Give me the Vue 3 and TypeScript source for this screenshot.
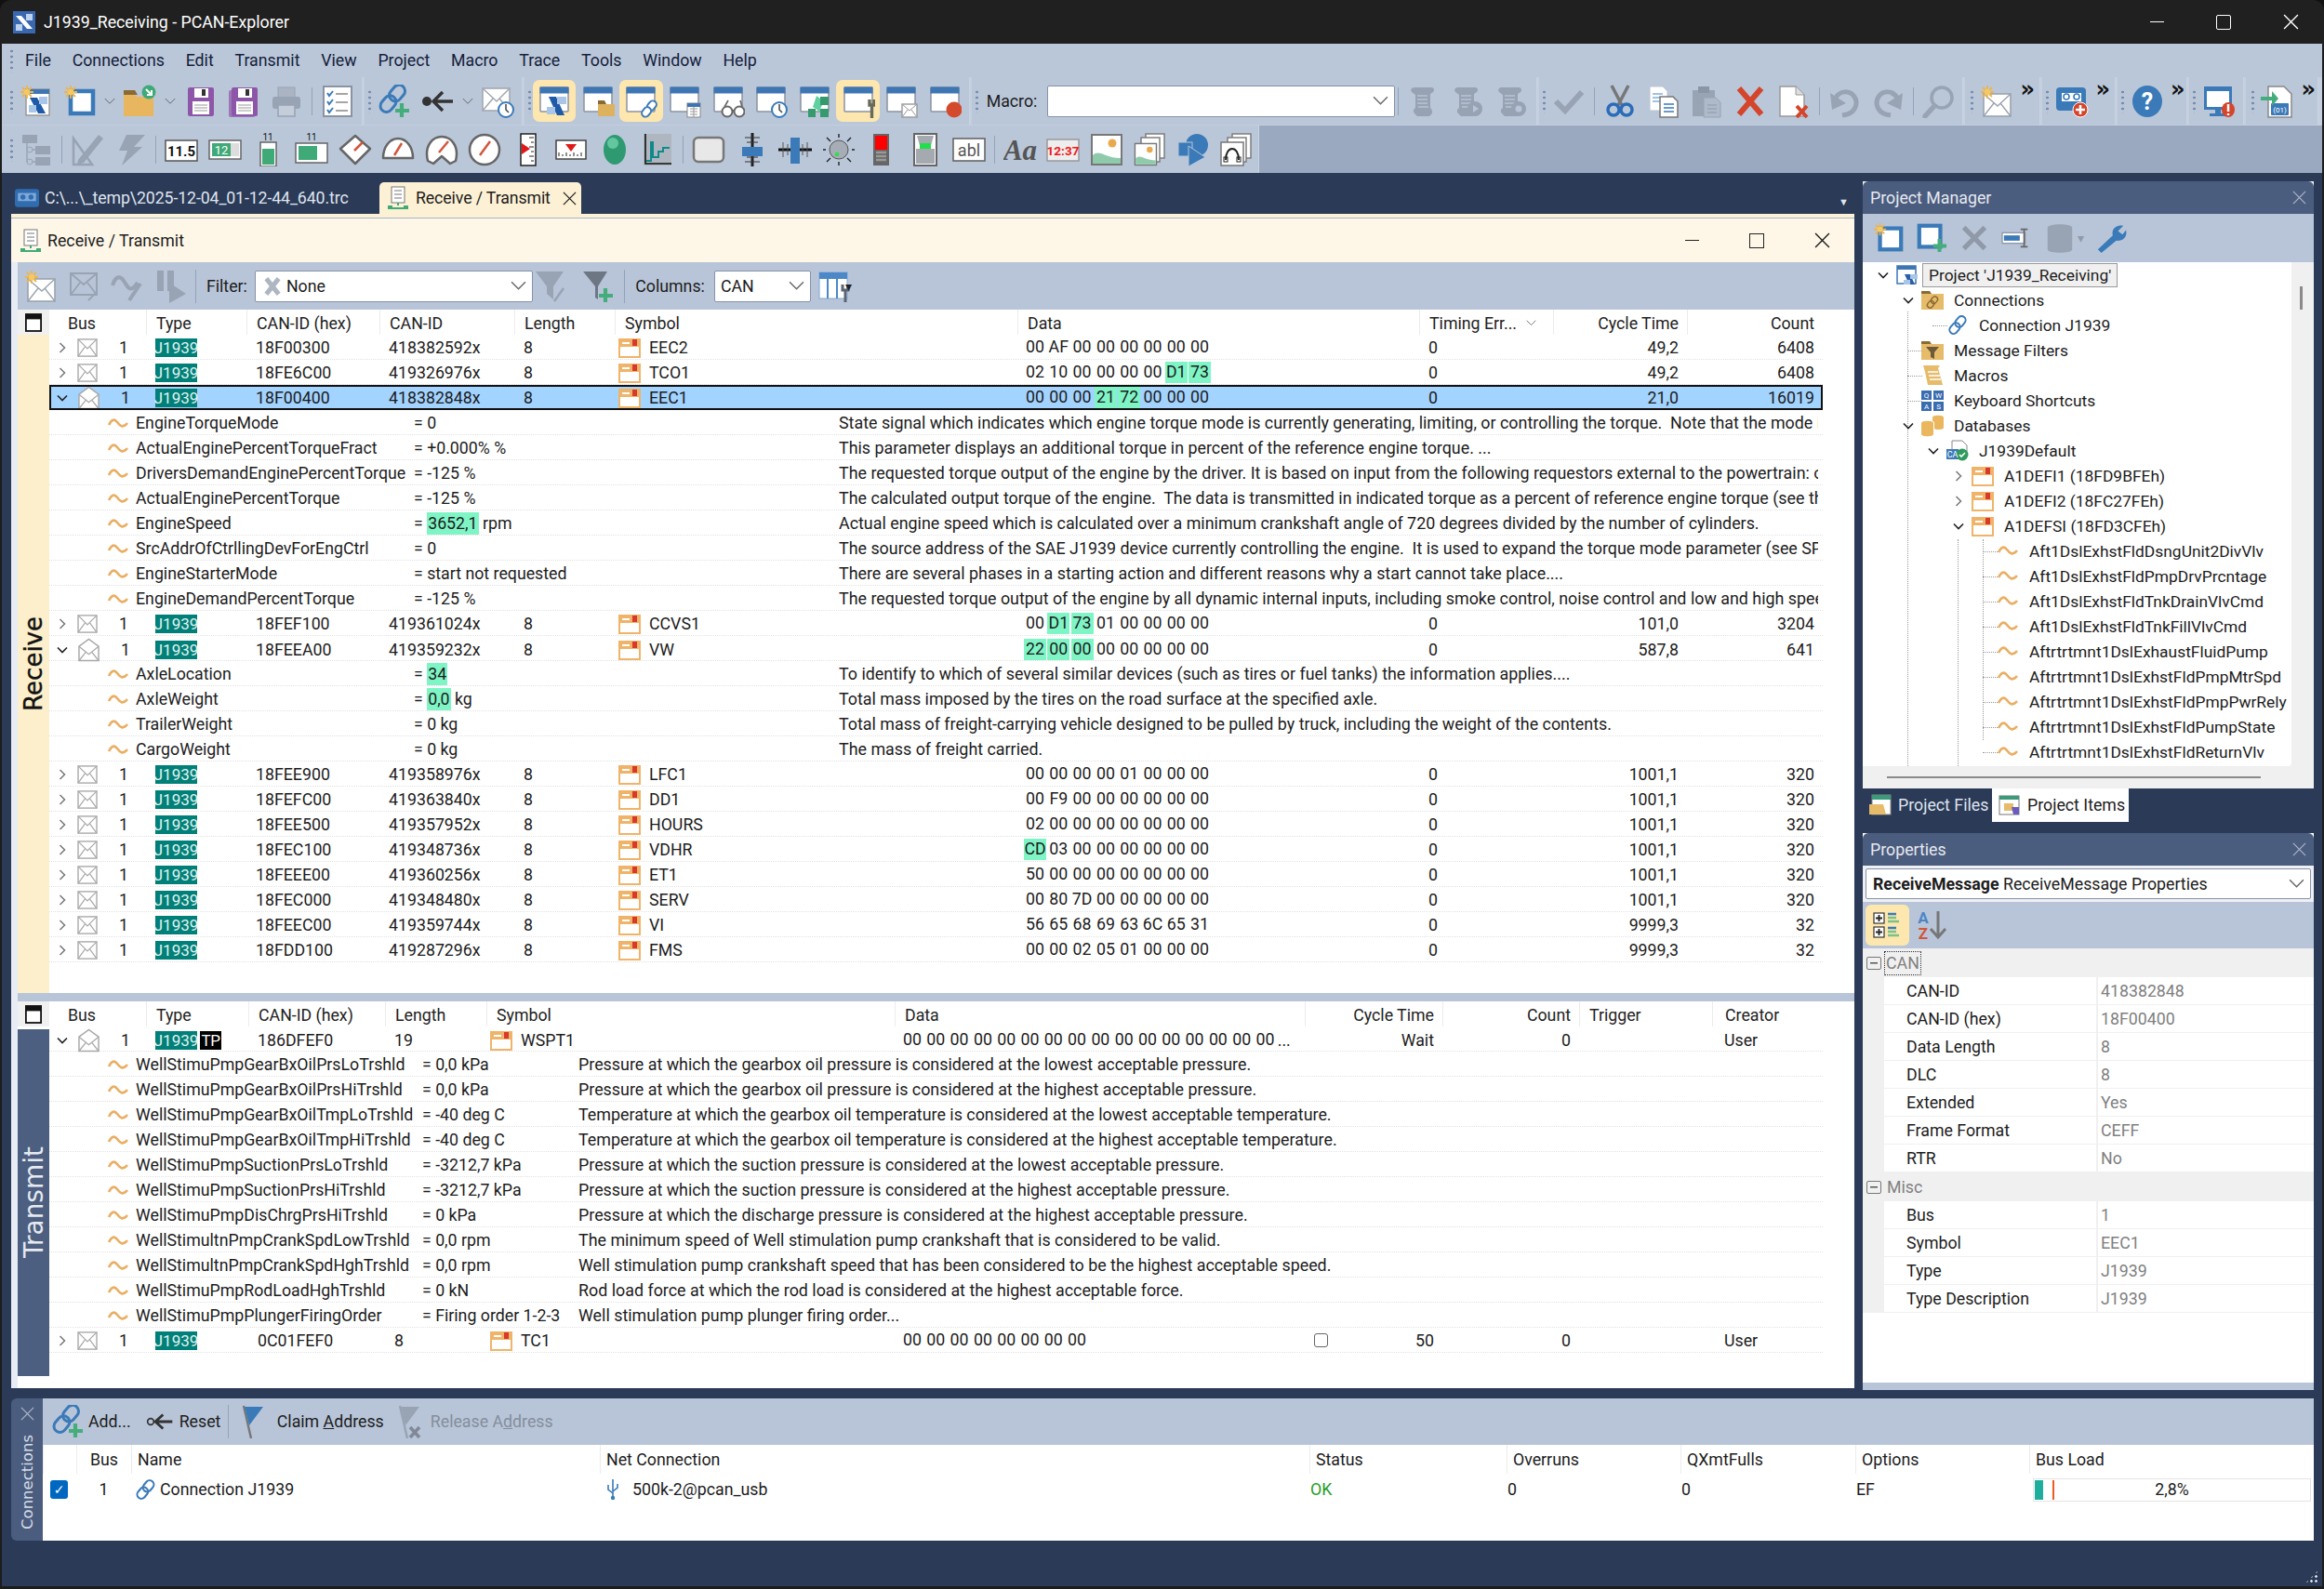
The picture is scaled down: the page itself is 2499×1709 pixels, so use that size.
<script setup lang="ts">
interface TbGroup { w: number; pad?: number; macro?: boolean; items: string[] }
interface RxMsg { id: string; can: string; sym: string; data: string; hl?: number[]; cycle: string; count: string; open?: boolean; sel?: boolean; signals?: Sig[] }
interface Sig { name: string; value: string; hot?: string; rest?: string; desc: string }
interface TreeRow { l: number; chev?: 'd' | 'r'; icon: string; text: string; leaf?: boolean; sel?: boolean }
interface IconText { x: number; y: number; t: string; s: number; f: string; w?: number; fam?: string; it?: boolean }

const menus = ['File', 'Connections', 'Edit', 'Transmit', 'View', 'Project', 'Macro', 'Trace', 'Tools', 'Window', 'Help']

const hotIcons = ['winproj', 'winlink', 'winwrench']

// captions drawn on top of an icon, in the icon's own 36 or 24 unit box
const iconText: Record<string, IconText[]> = {
	help: [{ x: 18, y: 27, t: '?', s: 25, f: '#fff', w: 700 }],
	filearrow: [{ x: 20.5, y: 30, t: '(01)', s: 8, f: '#fff' }],
	num115: [{ x: 18, y: 24.5, t: '11.5', s: 15, f: '#111', w: 700 }],
	num12: [{ x: 14, y: 23, t: '12', s: 13, f: '#fff' }],
	vbar: [{ x: 18, y: 8, t: '11', s: 10, f: '#111' }],
	hbar: [{ x: 18, y: 8, t: '11', s: 10, f: '#111' }],
	abl: [{ x: 18, y: 25, t: 'abl', s: 18, f: '#555' }],
	aa: [{ x: 18, y: 29, t: 'Aa', s: 31, f: '#555', w: 700, it: true, fam: 'Liberation Serif' }],
	clock: [{ x: 18, y: 24, t: '12:37', s: 13.5, f: '#f01818', w: 700 }],
	tkeys: [
		{ x: 5.5, y: 9, t: 'Q', s: 8, f: '#fff' },
		{ x: 18.5, y: 9, t: 'W', s: 8, f: '#fff' },
		{ x: 5.5, y: 21, t: 'A', s: 8, f: '#fff' },
		{ x: 18.5, y: 21, t: 'S', s: 8, f: '#fff' }
	],
	tcdb: [{ x: 6.5, y: 19, t: 'CA', s: 9, f: '#fff' }],
	az: [
		{ x: 9, y: 16, t: 'A', s: 17, f: '#4a86c6', w: 700 },
		{ x: 9, y: 33, t: 'Z', s: 17, f: '#d4553b', w: 700 }
	]
}

const toolbar1: TbGroup[] = [
	{ w: 388, pad: 5, items: ['newproj', 'newwin', 'v', 'folder', 'v', 'save', 'saveall', 'print', '|', 'checklist'] },
	{ w: 170, items: ['linkadd', 'arrowback', 'v', 'mailclock'] },
	{ w: 479, items: ['winproj', 'winfolder', 'winlink', 'wintable', 'winglass', 'winclock', 'winnet', 'winwrench', 'winmail', 'winrec'] },
	{ w: 608, macro: true, items: ['|', 'macro1', 'macro2', 'macro3'] },
	{ w: 456, items: ['okcheck', '|', 'scissors', 'copy', 'paste', 'delx', 'docx', '|', 'undo', 'redo', '|', 'find'] },
	{ w: 81, pad: 2, items: ['mailnew', '>'] },
	{ w: 79, items: ['tapeadd', '>'] },
	{ w: 75, items: ['help', '>'] },
	{ w: 59, items: ['monitor'] },
	{ w: 78, pad: 2, items: ['filearrow', '>'] }
]

const toolbar2: TbGroup = {
	w: 1352, pad: 5,
	items: ['tree', '|', 'pencil', 'bolt', '|', 'num115', 'num12', 'vbar', 'hbar', 'g1', 'g2', 'g3', 'g4', 'ruler', 'hruler', 'led', 'chart', '|', 'rect', 'vslider', 'hslider', 'bulb', 'signal', 'hourglass', 'abl', '|', 'aa', 'clock', 'pic', 'pics', 'shapes', 'arcs']
}

const rxRows: RxMsg[] = [
	{ id: '18F00300', can: '418382592x', sym: 'EEC2', data: '00 AF 00 00 00 00 00 00', cycle: '49,2', count: '6408' },
	{ id: '18FE6C00', can: '419326976x', sym: 'TCO1', data: '02 10 00 00 00 00 D1 73', hl: [6, 7], cycle: '49,2', count: '6408' },
	{
		id: '18F00400', can: '418382848x', sym: 'EEC1', data: '00 00 00 21 72 00 00 00', hl: [3, 4], cycle: '21,0', count: '16019', open: true, sel: true,
		signals: [
			{ name: 'EngineTorqueMode', value: '0', desc: 'State signal which indicates which engine torque mode is currently generating, limiting, or controlling the torque.  Note that the mode is not a' },
			{ name: 'ActualEnginePercentTorqueFract', value: '+0.000% %', desc: 'This parameter displays an additional torque in percent of the reference engine torque. ...' },
			{ name: 'DriversDemandEnginePercentTorque', value: '-125 %', desc: 'The requested torque output of the engine by the driver. It is based on input from the following requestors external to the powertrain: operator' },
			{ name: 'ActualEnginePercentTorque', value: '-125 %', desc: 'The calculated output torque of the engine.  The data is transmitted in indicated torque as a percent of reference engine torque (see the engine' },
			{ name: 'EngineSpeed', value: '', hot: '3652,1', rest: ' rpm', desc: 'Actual engine speed which is calculated over a minimum crankshaft angle of 720 degrees divided by the number of cylinders.' },
			{ name: 'SrcAddrOfCtrllingDevForEngCtrl', value: '0', desc: 'The source address of the SAE J1939 device currently controlling the engine.  It is used to expand the torque mode parameter (see SPN 899) in' },
			{ name: 'EngineStarterMode', value: 'start not requested', desc: 'There are several phases in a starting action and different reasons why a start cannot take place....' },
			{ name: 'EngineDemandPercentTorque', value: '-125 %', desc: 'The requested torque output of the engine by all dynamic internal inputs, including smoke control, noise control and low and high speed governing' }
		]
	},
	{ id: '18FEF100', can: '419361024x', sym: 'CCVS1', data: '00 D1 73 01 00 00 00 00', hl: [1, 2], cycle: '101,0', count: '3204' },
	{
		id: '18FEEA00', can: '419359232x', sym: 'VW', data: '22 00 00 00 00 00 00 00', hl: [0, 1, 2], cycle: '587,8', count: '641', open: true,
		signals: [
			{ name: 'AxleLocation', value: '', hot: '34', desc: 'To identify to which of several similar devices (such as tires or fuel tanks) the information applies....' },
			{ name: 'AxleWeight', value: '', hot: '0,0', rest: ' kg', desc: 'Total mass imposed by the tires on the road surface at the specified axle.' },
			{ name: 'TrailerWeight', value: '0 kg', desc: 'Total mass of freight-carrying vehicle designed to be pulled by truck, including the weight of the contents.' },
			{ name: 'CargoWeight', value: '0 kg', desc: 'The mass of freight carried.' }
		]
	},
	{ id: '18FEE900', can: '419358976x', sym: 'LFC1', data: '00 00 00 00 01 00 00 00', cycle: '1001,1', count: '320' },
	{ id: '18FEFC00', can: '419363840x', sym: 'DD1', data: '00 F9 00 00 00 00 00 00', cycle: '1001,1', count: '320' },
	{ id: '18FEE500', can: '419357952x', sym: 'HOURS', data: '02 00 00 00 00 00 00 00', cycle: '1001,1', count: '320' },
	{ id: '18FEC100', can: '419348736x', sym: 'VDHR', data: 'CD 03 00 00 00 00 00 00', hl: [0], cycle: '1001,1', count: '320' },
	{ id: '18FEEE00', can: '419360256x', sym: 'ET1', data: '50 00 00 00 00 00 00 00', cycle: '1001,1', count: '320' },
	{ id: '18FEC000', can: '419348480x', sym: 'SERV', data: '00 80 7D 00 00 00 00 00', cycle: '1001,1', count: '320' },
	{ id: '18FEEC00', can: '419359744x', sym: 'VI', data: '56 65 68 69 63 6C 65 31', cycle: '9999,3', count: '32' },
	{ id: '18FDD100', can: '419287296x', sym: 'FMS', data: '00 00 02 05 01 00 00 00', cycle: '9999,3', count: '32' }
]

const txSignals: Sig[] = [
	{ name: 'WellStimuPmpGearBxOilPrsLoTrshld', value: '0,0 kPa', desc: 'Pressure at which the gearbox oil pressure is considered at the lowest acceptable pressure.' },
	{ name: 'WellStimuPmpGearBxOilPrsHiTrshld', value: '0,0 kPa', desc: 'Pressure at which the gearbox oil pressure is considered at the highest acceptable pressure.' },
	{ name: 'WellStimuPmpGearBxOilTmpLoTrshld', value: '-40 deg C', desc: 'Temperature at which the gearbox oil temperature is considered at the lowest acceptable temperature.' },
	{ name: 'WellStimuPmpGearBxOilTmpHiTrshld', value: '-40 deg C', desc: 'Temperature at which the gearbox oil temperature is considered at the highest acceptable temperature.' },
	{ name: 'WellStimuPmpSuctionPrsLoTrshld', value: '-3212,7 kPa', desc: 'Pressure at which the suction pressure is considered at the lowest acceptable pressure.' },
	{ name: 'WellStimuPmpSuctionPrsHiTrshld', value: '-3212,7 kPa', desc: 'Pressure at which the suction pressure is considered at the highest acceptable pressure.' },
	{ name: 'WellStimuPmpDisChrgPrsHiTrshld', value: '0 kPa', desc: 'Pressure at which the discharge pressure is considered at the highest acceptable pressure.' },
	{ name: 'WellStimultnPmpCrankSpdLowTrshld', value: '0,0 rpm', desc: 'The minimum speed of Well stimulation pump crankshaft that is considered to be valid.' },
	{ name: 'WellStimultnPmpCrankSpdHghTrshld', value: '0,0 rpm', desc: 'Well stimulation pump crankshaft speed that has been considered to be the highest acceptable speed.' },
	{ name: 'WellStimuPmpRodLoadHghTrshld', value: '0 kN', desc: 'Rod load force at which the rod load is considered at the highest acceptable force.' },
	{ name: 'WellStimuPmpPlungerFiringOrder', value: 'Firing order 1-2-3', desc: 'Well stimulation pump plunger firing order...' }
]

const treeRows: TreeRow[] = [
	{ l: 0, chev: 'd', icon: 'tproj', text: "Project 'J1939_Receiving'", sel: true },
	{ l: 1, chev: 'd', icon: 'tconn', text: 'Connections' },
	{ l: 2, icon: 'link', text: 'Connection J1939', leaf: true },
	{ l: 1, icon: 'tfilter', text: 'Message Filters', leaf: true },
	{ l: 1, icon: 'tmacro', text: 'Macros', leaf: true },
	{ l: 1, icon: 'tkeys', text: 'Keyboard Shortcuts', leaf: true },
	{ l: 1, chev: 'd', icon: 'tdbs', text: 'Databases' },
	{ l: 2, chev: 'd', icon: 'tcdb', text: 'J1939Default' },
	{ l: 3, chev: 'r', icon: 'msg', text: 'A1DEFI1 (18FD9BFEh)' },
	{ l: 3, chev: 'r', icon: 'msg', text: 'A1DEFI2 (18FC27FEh)' },
	{ l: 3, chev: 'd', icon: 'msg', text: 'A1DEFSI (18FD3CFEh)' },
	...['Aft1DslExhstFldDsngUnit2DivVlv', 'Aft1DslExhstFldPmpDrvPrcntage', 'Aft1DslExhstFldTnkDrainVlvCmd', 'Aft1DslExhstFldTnkFillVlvCmd', 'Aftrtrtmnt1DslExhaustFluidPump', 'Aftrtrtmnt1DslExhstFldPmpMtrSpd', 'Aftrtrtmnt1DslExhstFldPmpPwrRely', 'Aftrtrtmnt1DslExhstFldPumpState', 'Aftrtrtmnt1DslExhstFldReturnVlv']
		.map((text): TreeRow => ({ l: 4, icon: 'wave', text, leaf: true }))
]

const propCan = [['CAN-ID', '418382848'], ['CAN-ID (hex)', '18F00400'], ['Data Length', '8'], ['DLC', '8'], ['Extended', 'Yes'], ['Frame Format', 'CEFF'], ['RTR', 'No']]
const propMisc = [['Bus', '1'], ['Symbol', 'EEC1'], ['Type', 'J1939'], ['Type Description', 'J1939']]

const rxHead = ['Bus', 'Type', 'CAN-ID (hex)', 'CAN-ID', 'Length', 'Symbol', 'Data']
const txHead = ['Bus', 'Type', 'CAN-ID (hex)', 'Length', 'Symbol', 'Data']

const bytes = (s: string) => s.split(' ')
const wspt = Array<string>(16).fill('00')
const tc1 = Array<string>(8).fill('00')
</script>

<template>
	<div class="app">
		<!-- icon sprite -->
		<svg class="sprite" width="0" height="0">
			<defs>
				<g id="star"><path d="M8 1v14M1 8h14M3 3l10 10M13 3L3 13" stroke="#efb44a" stroke-width="1.8" /><circle cx="8" cy="8" r="3.2" fill="#f6c862" /></g>
				<g id="winb"><rect x="3" y="3" width="30" height="26" rx="1" fill="#fff" stroke="#8a93a3" stroke-width="1.5" /><rect x="2.5" y="2.5" width="31" height="7" fill="#3e76b4" /></g>
				<g id="flop"><rect x="5" y="3" width="28" height="31" rx="2" fill="#8e56a8" /><rect x="12" y="4" width="15" height="10" fill="#fff" /><rect x="20" y="5" width="4" height="7" fill="#333" /><rect x="10" y="18" width="18" height="14" fill="#fff" /><path d="M12 22h14M12 25h14M12 28h14" stroke="#999" /></g>
				<g id="scroll"><path d="M9 3h17c3 0 4 3 2 5l-3 2v15c2 2 3 5 1 7-1 2-3 2-5 2H11l-3-3c-2-2-1-5 1-6V11L5 8C3 5 5 3 9 3z" fill="#97a2b3" /><path d="M11 12h11M11 16h11M11 20h11M12 24h11" stroke="#b8c5d8" stroke-width="1.6" /></g>
				<g id="picb"><rect x="2" y="2" width="32" height="32" fill="#fff" stroke="#777" stroke-width="2" /><circle cx="24" cy="11" r="4.5" fill="#eaa94d" /><path d="M3 24c7-7 13 3 30 3v6H3z" fill="#8fcbab" /></g>
			</defs>
			<symbol id="newproj" viewBox="0 0 36 36"><rect x="7" y="5" width="25" height="28" fill="#fff" stroke="#999" stroke-width="1.5" /><rect x="7" y="5" width="25" height="5" fill="#3e76b4" /><path d="M11 14h8l9 17h-8z" fill="#1f5aa8" /><rect x="21" y="13" width="9" height="8" fill="#a9c6e8" /><rect x="10" y="22" width="8" height="8" fill="#a9c6e8" /><use href="#star" /></symbol>
			<symbol id="newwin" viewBox="0 0 36 36"><rect x="8" y="7" width="24" height="24" fill="#fff" stroke="#3a7ab8" stroke-width="4.5" /><use href="#star" /></symbol>
			<symbol id="folder" viewBox="0 0 36 36"><path d="M1 10h11l3 3h18v21H1z" fill="#e8b65e" /><path d="M1 6h12l3 5H1z" fill="#8a6a32" /><circle cx="28" cy="8" r="7.5" fill="#3faa78" /><path d="M25 5l6 6M31 6v5h-5" stroke="#fff" stroke-width="2" fill="none" /></symbol>
			<symbol id="save" viewBox="0 0 36 36"><use href="#flop" /></symbol>
			<symbol id="saveall" viewBox="0 0 36 36"><rect x="2" y="6" width="28" height="29" rx="2" fill="#8e56a8" opacity=".7" /><use href="#flop" /></symbol>
			<symbol id="print" viewBox="0 0 36 36"><rect x="9" y="3" width="18" height="12" fill="#aab4c3" stroke="#98a3b3" /><rect x="3" y="13" width="30" height="13" rx="3" fill="#98a3b3" /><rect x="9" y="22" width="18" height="12" fill="#c4cedb" stroke="#98a3b3" stroke-width="1.5" /></symbol>
			<symbol id="checklist" viewBox="0 0 36 36"><rect x="3" y="2" width="30" height="32" fill="#fff" stroke="#8a93a3" stroke-width="2" /><path d="M7 9l2 3 4-5M7 18l2 3 4-5M7 27l2 3 4-5" stroke="#3a7ab8" stroke-width="2" fill="none" /><path d="M16 10h13M16 19h13M16 28h13" stroke="#888" stroke-width="1.5" /></symbol>
			<symbol id="linkadd" viewBox="0 0 36 36"><g transform="rotate(40 16 16)" fill="none" stroke="#3a7ab8" stroke-width="3"><rect x="9" y="-2" width="13" height="19" rx="6.5" /><rect x="9" y="13" width="13" height="19" rx="6.5" /></g><path d="M26 20v15M19 28h15" stroke="#45ad7c" stroke-width="4.2" /></symbol>
			<symbol id="link" viewBox="0 0 36 36"><g transform="rotate(40 18 18)" fill="none" stroke="#3a7ab8" stroke-width="3"><rect x="11" y="1" width="13" height="19" rx="6.5" /><rect x="11" y="15" width="13" height="19" rx="6.5" /></g></symbol>
			<symbol id="arrowback" viewBox="0 0 36 36"><circle cx="6" cy="18" r="5" fill="#333" /><path d="M13 18h21M23 8L13 18l10 10" stroke="#333" stroke-width="3.4" fill="none" /></symbol>
			<symbol id="mailclock" viewBox="0 0 36 36"><rect x="2" y="4" width="29" height="24" fill="#fff" stroke="#a2a9b3" stroke-width="1.6" /><path d="M2 4l15 14L31 4M2 28l11-13M31 28L20 15" fill="none" stroke="#a2a9b3" stroke-width="1.5" /><circle cx="27" cy="27" r="8" fill="#fff" stroke="#3a7ab8" stroke-width="2" /><path d="M27 21v6l3 3" fill="none" stroke="#444" stroke-width="1.5" /></symbol>
			<symbol id="winproj" viewBox="0 0 36 36"><use href="#winb" /><path d="M12 13h8l9 20h-8z" fill="#1f5aa8" /><rect x="21" y="13" width="10" height="8" fill="#a9c6e8" /><rect x="10" y="24" width="9" height="8" fill="#a9c6e8" /></symbol>
			<symbol id="winfolder" viewBox="0 0 36 36"><use href="#winb" /><path d="M18 19h6l2 2h10v13H18z" fill="#dcb25f" /><path d="M18 17h7l2 4h-9z" fill="#8a6a32" /></symbol>
			<symbol id="winlink" viewBox="0 0 36 36"><use href="#winb" /><g transform="rotate(40 27 26)" fill="#fff" stroke="#3a7ab8" stroke-width="2"><rect x="23" y="16" width="8" height="11" rx="4" /><rect x="23" y="25" width="8" height="11" rx="4" /></g></symbol>
			<symbol id="wintable" viewBox="0 0 36 36"><use href="#winb" /><rect x="21" y="20" width="14" height="15" fill="#fff" stroke="#888" /><rect x="21" y="20" width="14" height="4" fill="#3e76b4" /><path d="M24 26h8M24 29h8M24 32h8M28 24v11" stroke="#999" /></symbol>
			<symbol id="winglass" viewBox="0 0 36 36"><use href="#winb" /><circle cx="17" cy="29" r="5.5" fill="#fff" stroke="#666" stroke-width="2" /><circle cx="30" cy="29" r="5.5" fill="#fff" stroke="#666" stroke-width="2" /><path d="M22 28h3M14 24l4-7M33 24l-2-7" stroke="#666" stroke-width="1.6" /></symbol>
			<symbol id="winclock" viewBox="0 0 36 36"><use href="#winb" /><circle cx="27" cy="27" r="8" fill="#fff" stroke="#3a7ab8" stroke-width="2" /><path d="M27 21v6l3 3" fill="none" stroke="#444" stroke-width="1.5" /></symbol>
			<symbol id="winnet" viewBox="0 0 36 36"><use href="#winb" /><path d="M20 12l8 6-4 8 4 6-12-8z" fill="#5fd0a0" /><rect x="24" y="13" width="9" height="9" fill="#37996e" /><rect x="11" y="26" width="8" height="9" fill="#37996e" /><rect x="24" y="26" width="9" height="9" fill="#37996e" /></symbol>
			<symbol id="winwrench" viewBox="0 0 36 36"><use href="#winb" /><path d="M30 16v6h5v-6M32.5 22v14" fill="none" stroke="#6a6a5a" stroke-width="3.4" /></symbol>
			<symbol id="winmail" viewBox="0 0 36 36"><use href="#winb" /><rect x="19" y="21" width="16" height="14" fill="#fff" stroke="#999" stroke-width="1.4" /><path d="M19 21l8 7 8-7M19 35l6-8M35 35l-6-8" fill="none" stroke="#999" /></symbol>
			<symbol id="winrec" viewBox="0 0 36 36"><use href="#winb" /><circle cx="28" cy="27" r="8.5" fill="#d34a2c" /></symbol>
			<symbol id="macro1" viewBox="0 0 36 36"><use href="#scroll" /></symbol>
			<symbol id="macro2" viewBox="0 0 36 36"><use href="#scroll" /><circle cx="26" cy="26" r="8" fill="#97a2b3" /><path d="M24 22l6 4-6 4z" fill="#b8c5d8" /></symbol>
			<symbol id="macro3" viewBox="0 0 36 36"><use href="#scroll" /><circle cx="26" cy="26" r="8" fill="#97a2b3" /><circle cx="26" cy="26" r="3.5" fill="#b8c5d8" /></symbol>
			<symbol id="okcheck" viewBox="0 0 36 36"><path d="M4 18l10 10L32 8" fill="none" stroke="#98a3b3" stroke-width="6" /></symbol>
			<symbol id="scissors" viewBox="0 0 36 36"><path d="M9 1l11 21M27 1L16 22" stroke="#777" stroke-width="3.5" /><circle cx="11" cy="27" r="6" fill="none" stroke="#2a6cb8" stroke-width="3.5" /><circle cx="25" cy="27" r="6" fill="none" stroke="#2a6cb8" stroke-width="3.5" /></symbol>
			<symbol id="copy" viewBox="0 0 36 36"><path d="M3 2h14l5 5v21H3z" fill="#fff" stroke="#bcc4d0" /><path d="M6 10h11M6 14h11M6 18h11" stroke="#7fb0e0" stroke-width="1.6" /><path d="M14 13h14l5 5v17H14z" fill="#fff" stroke="#777" stroke-width="1.5" /><path d="M18 21h11M18 25h11M18 29h11" stroke="#3a7ab8" stroke-width="1.6" /></symbol>
			<symbol id="paste" viewBox="0 0 36 36"><rect x="3" y="6" width="24" height="28" fill="#98a3b3" /><rect x="9" y="2" width="12" height="7" fill="#8a95a5" /><path d="M15 14h13l5 5v16H15z" fill="#aeb9c9" stroke="#98a3b3" /><path d="M19 22h10M19 26h10M19 30h10" stroke="#98a3b3" stroke-width="1.5" /></symbol>
			<symbol id="delx" viewBox="0 0 36 36"><path d="M6 4l24 28M30 4L6 32" stroke="#d4452b" stroke-width="6" /></symbol>
			<symbol id="docx" viewBox="0 0 36 36"><path d="M3 2h17l9 9v23H3z" fill="#fff" stroke="#999" stroke-width="1.5" /><path d="M20 2v9h9" fill="#ddd" stroke="#999" /><path d="M21 23l11 12M32 23L21 35" stroke="#d4452b" stroke-width="4" /></symbol>
			<symbol id="undo" viewBox="0 0 36 36"><path d="M15 33l5-1c10-3 12-13 8-19-5-7-15-7-20 1" fill="none" stroke="#98a3b3" stroke-width="5" /><path d="M2 9l2 18 15-7z" fill="#98a3b3" /></symbol>
			<symbol id="redo" viewBox="0 0 36 36"><path d="M21 33l-5-1C6 29 4 19 8 13c5-7 15-7 20 1" fill="none" stroke="#98a3b3" stroke-width="5" /><path d="M34 9l-2 18-15-7z" fill="#98a3b3" /></symbol>
			<symbol id="find" viewBox="0 0 36 36"><circle cx="21" cy="14" r="11" fill="none" stroke="#98a3b3" stroke-width="3.5" /><path d="M13 23L3 34" stroke="#98a3b3" stroke-width="5.5" stroke-linecap="round" /></symbol>
			<symbol id="mailnew" viewBox="0 0 36 36"><rect x="4" y="10" width="29" height="24" fill="#fff" stroke="#9aa3ad" stroke-width="1.6" /><path d="M4 10l15 13 14-13M4 34l11-14M33 34L22 20" fill="none" stroke="#9aa3ad" stroke-width="1.4" /><use href="#star" /></symbol>
			<symbol id="mailoff" viewBox="0 0 36 36"><rect x="3" y="4" width="28" height="23" fill="none" stroke="#98a3b3" stroke-width="2" /><path d="M3 4l14 12L31 4M3 27l10-13M31 27L21 14M22 33l8-8" fill="none" stroke="#98a3b3" stroke-width="1.8" /></symbol>
			<symbol id="waveoff" viewBox="0 0 36 36"><path d="M2 17c3-10 8-11 12-5s6 12 12 6l3-4M20 33l12-18" fill="none" stroke="#98a3b3" stroke-width="4" /></symbol>
			<symbol id="txoff" viewBox="0 0 36 36"><path d="M3 1h7v22H3zM14 1h7v22h-7z" fill="#98a3b3" /><path d="M16 14l18 12-18 10z" fill="#98a3b3" /></symbol>
			<symbol id="tapeadd" viewBox="0 0 36 36"><rect x="1" y="3" width="32" height="25" rx="4" fill="#3a7ab8" /><rect x="7" y="9" width="21" height="9" fill="#fff" /><circle cx="12" cy="13" r="3" fill="none" stroke="#3a7ab8" stroke-width="1.6" /><circle cx="23" cy="13" r="3" fill="none" stroke="#3a7ab8" stroke-width="1.6" /><circle cx="27" cy="27" r="8" fill="#d4452b" stroke="#fff" /><path d="M27 22v10M22 27h10" stroke="#fff" stroke-width="2.6" /></symbol>
			<symbol id="help" viewBox="0 0 36 36"><ellipse cx="18" cy="18" rx="16" ry="17" fill="#3a7ab8" /></symbol>
			<symbol id="monitor" viewBox="0 0 36 36"><rect x="2" y="2" width="30" height="25" fill="#3a7ab8" /><rect x="5" y="7" width="24" height="17" fill="#fff" /><rect x="14" y="27" width="6" height="4" fill="#3a7ab8" /><rect x="8" y="31" width="18" height="3" fill="#3a7ab8" /><ellipse cx="28" cy="27" rx="7" ry="8" fill="#d4452b" /><path d="M28 21v8M28 31v2" stroke="#fff" stroke-width="2.5" /></symbol>
			<symbol id="filearrow" viewBox="0 0 36 36"><path d="M8 2h17l8 8v25H8z" fill="#fff" stroke="#888" stroke-width="1.5" /><rect x="11" y="20" width="19" height="13" rx="1" fill="#3a7ab8" /><path d="M0 13h12v-6l7 8-7 8v-6H0z" fill="#45ad7c" /></symbol>
			<symbol id="tree" viewBox="0 0 36 36"><rect x="3" y="2" width="16" height="9" fill="#98a3b3" /><rect x="17" y="14" width="16" height="9" fill="#98a3b3" /><rect x="17" y="26" width="16" height="9" fill="#98a3b3" /><path d="M8 11v20h9M8 18h9" fill="none" stroke="#98a3b3" stroke-width="1.5" /><circle cx="11" cy="18" r="3" fill="#b8c5d8" stroke="#98a3b3" /><circle cx="11" cy="31" r="3" fill="#b8c5d8" stroke="#98a3b3" /></symbol>
			<symbol id="pencil" viewBox="0 0 36 36"><path d="M3 34V6l20 28z" fill="none" stroke="#98a3b3" stroke-width="2.5" /><path d="M8 29L30 2l5 4-21 26-7 2z" fill="#98a3b3" /></symbol>
			<symbol id="bolt" viewBox="0 0 36 36"><path d="M14 2h20L22 15h9L9 35l6-16H6z" fill="#98a3b3" /></symbol>
			<symbol id="num115" viewBox="0 0 36 36"><rect x="1" y="8" width="34" height="22" fill="#fff" stroke="#555" stroke-width="1.5" /></symbol>
			<symbol id="num12" viewBox="0 0 36 36"><rect x="1" y="8" width="34" height="20" fill="#fff" stroke="#666" stroke-width="1.5" /><rect x="4" y="11" width="20" height="14" fill="#3faa78" /><rect x="24" y="11" width="9" height="14" fill="#ddd" /></symbol>
			<symbol id="vbar" viewBox="0 0 36 36"><rect x="10" y="10" width="17" height="26" fill="#fff" stroke="#666" stroke-width="1.5" /><rect x="12" y="17" width="13" height="17" fill="#3faa78" /></symbol>
			<symbol id="hbar" viewBox="0 0 36 36"><rect x="1" y="11" width="34" height="21" fill="#fff" stroke="#666" stroke-width="1.5" /><rect x="4" y="14" width="20" height="15" fill="#3faa78" /></symbol>
			<symbol id="g1" viewBox="0 0 36 36"><path d="M2 17L18 3l16 14-16 16z" fill="#fff" stroke="#666" stroke-width="2.5" stroke-linejoin="round" /><path d="M17 19l9-9" stroke="#d4553b" stroke-width="2.5" /></symbol>
			<symbol id="g2" viewBox="0 0 36 36"><path d="M2 27c0-12 7-21 16-21s16 9 16 21z" fill="#fff" stroke="#666" stroke-width="2.5" stroke-linejoin="round" /><path d="M14 24l8-13" stroke="#d4553b" stroke-width="2.5" /></symbol>
			<symbol id="g3" viewBox="0 0 36 36"><path d="M3 30C-1 14 8 4 18 4s19 10 15 26l-6 3-9-8-9 8z" fill="#fff" stroke="#666" stroke-width="2.5" stroke-linejoin="round" /><path d="M15 21l10-12" stroke="#d4553b" stroke-width="2.5" /></symbol>
			<symbol id="g4" viewBox="0 0 36 36"><circle cx="18" cy="18" r="16" fill="#fff" stroke="#666" stroke-width="2.5" /><path d="M13 24l11-15" stroke="#d4553b" stroke-width="2.5" /></symbol>
			<symbol id="ruler" viewBox="0 0 36 36"><rect x="10" y="1" width="16" height="34" fill="#fff" stroke="#222" stroke-width="1.5" /><path d="M19 5h5M21 10h3M19 15h5M21 20h3M19 25h5M21 30h3" stroke="#222" /><path d="M11 11l9 6-9 6z" fill="#e01818" /></symbol>
			<symbol id="hruler" viewBox="0 0 36 36"><rect x="2" y="8" width="32" height="20" fill="#fff" stroke="#444" stroke-width="1.5" /><path d="M12 12h12l-6 8z" fill="#e01818" /><path d="M5 25v-4M9 25v-2M13 25v-4M17 25v-2M21 25v-4M25 25v-2M29 25v-4" stroke="#222" /></symbol>
			<symbol id="led" viewBox="0 0 36 36"><ellipse cx="18" cy="18" rx="12" ry="16" fill="#2f9a72" /><ellipse cx="16" cy="11" rx="6" ry="6" fill="#62c79e" /></symbol>
			<symbol id="chart" viewBox="0 0 36 36"><rect x="3" y="1" width="30" height="34" fill="#b0b6bf" /><path d="M5 1v32h28" fill="none" stroke="#111" stroke-width="1.6" /><path d="M6 30h5V10h2v16h6v-6h5v-4h7" fill="none" stroke="#0f8a8a" stroke-width="2" /></symbol>
			<symbol id="rect" viewBox="0 0 36 36"><rect x="2" y="5" width="32" height="26" rx="5" fill="#e8e8e8" stroke="#777" stroke-width="2.5" /></symbol>
			<symbol id="vslider" viewBox="0 0 36 36"><path d="M18 0v36" stroke="#222" stroke-width="3" /><path d="M10 5h16M12 10h12M12 26h12M10 31h16" stroke="#333" /><rect x="7" y="15" width="22" height="10" fill="#3a7ab8" /></symbol>
			<symbol id="hslider" viewBox="0 0 36 36"><path d="M0 18h36" stroke="#111" stroke-width="3" /><path d="M5 10v16M10 12v12M26 12v12M31 10v16" stroke="#555" /><rect x="13" y="5" width="10" height="28" fill="#3a7ab8" /></symbol>
			<symbol id="bulb" viewBox="0 0 36 36"><circle cx="18" cy="18" r="10" fill="#a6adb6" stroke="#555" /><rect x="14" y="21" width="4" height="4" fill="#2ee04a" /><path d="M18 1v4M18 31v4M5 5l4 4M31 5l-4 4M5 31l4-4M31 31l-4-4M1 18h3M32 18h3" stroke="#222" stroke-width="1.4" /></symbol>
			<symbol id="signal" viewBox="0 0 36 36"><rect x="9" y="1" width="17" height="34" fill="#666" /><rect x="11" y="3" width="13" height="15" fill="#f00" /><path d="M12 21h11M12 25h11M12 29h11" stroke="#999" stroke-width="2.5" /></symbol>
			<symbol id="hourglass" viewBox="0 0 36 36"><rect x="6" y="1" width="24" height="34" fill="#fff" stroke="#666" stroke-width="2" /><path d="M9 3h18l-4 14h5v16H8V17h5z" fill="#a4aab0" /><rect x="12" y="11" width="12" height="6" fill="#1fe04a" /></symbol>
			<symbol id="abl" viewBox="0 0 36 36"><rect x="1" y="6" width="34" height="24" fill="#fff" stroke="#666" stroke-width="1.6" /></symbol>
			<symbol id="aa" viewBox="0 0 36 36"></symbol>
			<symbol id="clock" viewBox="0 0 36 36"><rect x="1" y="7" width="34" height="23" fill="#eee" stroke="#999" stroke-width="1.5" /></symbol>
			<symbol id="pic" viewBox="0 0 36 36"><use href="#picb" /></symbol>
			<symbol id="pics" viewBox="0 0 36 36"><rect x="14" y="1" width="20" height="26" fill="#fff" stroke="#777" stroke-width="1.4" /><rect x="9" y="5" width="20" height="26" fill="#fff" stroke="#777" stroke-width="1.4" /><g transform="translate(1 10) scale(.72)"><use href="#picb" /></g></symbol>
			<symbol id="shapes" viewBox="0 0 36 36"><circle cx="22" cy="13" r="12" fill="#3a7ab8" /><rect x="2" y="10" width="15" height="15" fill="#3a7ab8" stroke="#b8c5d8" /><path d="M13 14l18 12-18 10z" fill="#3a7ab8" stroke="#b8c5d8" /></symbol>
			<symbol id="arcs" viewBox="0 0 36 36"><rect x="14" y="1" width="20" height="26" fill="#fff" stroke="#777" stroke-width="1.4" /><rect x="9" y="5" width="20" height="26" fill="#fff" stroke="#777" stroke-width="1.4" /><rect x="2" y="10" width="24" height="25" fill="#fff" stroke="#777" stroke-width="1.5" /><path d="M7 29c0-16 14-16 14 0" fill="none" stroke="#222" stroke-width="2" /><rect x="5" y="26" width="4" height="5" fill="none" stroke="#222" /><rect x="19" y="26" width="4" height="5" fill="none" stroke="#222" /></symbol>
			<symbol id="xnone" viewBox="0 0 24 24"><path d="M4 2l16 20M20 2L4 22" stroke="#aeb6c2" stroke-width="6" /></symbol>
			<symbol id="funneloff" viewBox="0 0 36 36"><path d="M2 2h30L21 18v14l-7-6V18z" fill="#98a3b3" /><path d="M22 34l10-14" stroke="#98a3b3" stroke-width="2.5" /></symbol>
			<symbol id="funnelplus" viewBox="0 0 36 36"><path d="M2 2h26L18 18v14l-3-2V18z" fill="#6d7784" /><path d="M26 20v15M19 28h15" stroke="#45ad7c" stroke-width="4.2" /></symbol>
			<symbol id="columns" viewBox="0 0 36 36"><rect x="2" y="3" width="30" height="28" fill="#fff" stroke="#7fa8d8" /><rect x="2" y="3" width="30" height="7" fill="#4c88c8" /><path d="M11 3v28M21 3v28" stroke="#4c88c8" stroke-width="2" /><path d="M27 16v6h6v-6M30 22v13" fill="none" stroke="#5a6472" stroke-width="3" /></symbol>
			<symbol id="addwin" viewBox="0 0 36 36"><rect x="4" y="4" width="24" height="24" fill="#fff" stroke="#3a7ab8" stroke-width="4.5" /><path d="M27 19v15M20 27h15" stroke="#45ad7c" stroke-width="4.2" /></symbol>
			<symbol id="xgrey" viewBox="0 0 36 36"><path d="M6 6l24 24M30 6L6 30" stroke="#8f99a8" stroke-width="5.5" /></symbol>
			<symbol id="rename" viewBox="0 0 36 36"><rect x="1" y="12" width="26" height="12" fill="#fff" stroke="#8f99a8" stroke-width="1.5" /><rect x="3" y="15" width="18" height="6" fill="#3a7ab8" /><path d="M22 8h8M22 28h8M26 8v20" stroke="#666" stroke-width="1.8" fill="none" /></symbol>
			<symbol id="dbgrey" viewBox="0 0 36 36"><path d="M4 6c0-5 28-5 28 0v25c0 5-28 5-28 0z" fill="#98a3b3" /></symbol>
			<symbol id="wrench" viewBox="0 0 36 36"><path d="M3 31l17-16c-2-7 4-13 12-11l-6 6 5 4 4-5c2 8-4 13-11 12L7 35z" fill="#3a7ab8" /></symbol>
			<symbol id="cat" viewBox="0 0 36 36"><rect x="3" y="5" width="11" height="11" fill="#fff" stroke="#333" stroke-width="1.2" /><path d="M5 10.5h7M8.5 7v7" stroke="#222" stroke-width="1.8" /><rect x="3" y="20" width="11" height="11" fill="#fff" stroke="#333" stroke-width="1.2" /><path d="M5 25.5h7M8.5 22v7" stroke="#222" stroke-width="1.8" /><path d="M18 6h9" stroke="#3a7ab8" stroke-width="2.5" /><path d="M18 10h9M18 14h12" stroke="#7cc08a" stroke-width="2.5" /><path d="M18 21h9" stroke="#3a7ab8" stroke-width="2.5" /><path d="M18 25h9M18 29h12" stroke="#7cc08a" stroke-width="2.5" /></symbol>
			<symbol id="az" viewBox="0 0 36 36"><path d="M25 3v28M17 22l8 9 8-9" fill="none" stroke="#777" stroke-width="3" /></symbol>
			<symbol id="reset" viewBox="0 0 36 36"><circle cx="6" cy="18" r="4" fill="none" stroke="#333" stroke-width="2" /><path d="M12 18h22M22 9l-10 9 10 9" stroke="#333" stroke-width="3.4" fill="none" /></symbol>
			<symbol id="flag" viewBox="0 0 36 36"><path d="M6 1l8 35" stroke="#777" stroke-width="2.4" /><path d="M7 2h20L12 22z" fill="#3a7ab8" /></symbol>
			<symbol id="flagx" viewBox="0 0 36 36"><path d="M6 1l8 35" stroke="#98a3b3" stroke-width="2.4" /><path d="M7 2h20L12 22z" fill="#98a3b3" /><path d="M17 24l10 11M27 24L17 35" stroke="#7f8997" stroke-width="3.5" /></symbol>
			<symbol id="usb" viewBox="0 0 16 24"><path d="M8 1v21M3 7v5l5 4M13 6v4l-5 4" fill="none" stroke="#3a7ab8" stroke-width="1.6" /><circle cx="8" cy="21" r="2.2" fill="#3a7ab8" /></symbol>
			<symbol id="env" viewBox="0 0 24 22"><rect x="1" y="1" width="22" height="20" fill="#fff" stroke="#a8a8a8" stroke-width="1.5" /><path d="M1 1l11 11L23 1M1 21l8-11M23 21l-8-11" fill="none" stroke="#a8a8a8" stroke-width="1.3" /></symbol>
			<symbol id="envopen" viewBox="0 0 24 26"><path d="M1 9l11-8 11 8v16H1z" fill="#fff" stroke="#a8a8a8" stroke-width="1.5" /><path d="M1 9l11 9 11-9M1 25l8-10M23 25l-8-10" fill="none" stroke="#a8a8a8" stroke-width="1.3" /></symbol>
			<symbol id="msg" viewBox="0 0 24 24"><rect x="1" y="3" width="22" height="19" fill="#fff" stroke="#efb469" stroke-width="2" /><rect x="1" y="3" width="22" height="8" fill="#efb469" /><rect x="15" y="3" width="5" height="7" fill="#d8392b" /><rect x="4" y="6" width="8" height="2" fill="#fff" /></symbol>
			<symbol id="wave" viewBox="0 0 24 24"><path d="M2 13c3-6 6-7 9-3s6 7 11 1" fill="none" stroke="#eaae63" stroke-width="2.6" /></symbol>
			<symbol id="tproj" viewBox="0 0 24 24"><rect x="1" y="2" width="20" height="19" fill="#fff" stroke="#3e76b4" stroke-width="1.5" /><rect x="1" y="2" width="20" height="4" fill="#3e76b4" /><path d="M9 11h6l5 11h-6z" fill="#2a5ea8" /><rect x="15" y="11" width="8" height="5" fill="#a9c6e8" /><rect x="8" y="17" width="7" height="5" fill="#a9c6e8" /></symbol>
			<symbol id="tconn" viewBox="0 0 24 24"><path d="M0 5h24v17H0z" fill="#e6bb6a" /><path d="M0 2h9l2 3H0z" fill="#8a6a32" /><g transform="rotate(40 12 14)" fill="none" stroke="#8a6a32" stroke-width="1.4"><rect x="9" y="7" width="6" height="8" rx="3" /><rect x="9" y="13" width="6" height="8" rx="3" /></g></symbol>
			<symbol id="tfilter" viewBox="0 0 24 24"><path d="M0 5h24v17H0z" fill="#e6bb6a" /><path d="M0 2h9l2 3H0z" fill="#8a6a32" /><path d="M5 8h14l-5 6v7l-4-2v-5z" fill="#6d5a3a" /></symbol>
			<symbol id="tmacro" viewBox="0 0 24 24"><path d="M2 1h18l-2 3 5 18H7L4 8z" fill="#e6bb6a" /><path d="M7 8h11M8 12h12M9 16h12" stroke="#fff" stroke-width="1.6" /></symbol>
			<symbol id="tkeys" viewBox="0 0 24 24"><rect x="0" y="1" width="11" height="10" fill="#3a6cb0" /><rect x="13" y="1" width="11" height="10" fill="#3a6cb0" /><rect x="0" y="13" width="11" height="10" fill="#3a6cb0" /><rect x="13" y="13" width="11" height="10" fill="#3a6cb0" /></symbol>
			<symbol id="tdbs" viewBox="0 0 24 24"><path d="M0 9c0-3 13-3 13 0v12c0 3-13 3-13 0z" fill="#eab75f" /><path d="M12 3c0-3 12-3 12 0v11c0 2-8 3-10 1V8l-2-1z" fill="#eab75f" /></symbol>
			<symbol id="tcdb" viewBox="0 0 24 24"><path d="M6 1h11l5 5v8H6z" fill="#fff" stroke="#888" /><rect x="0" y="10" width="13" height="11" fill="#3a7ab8" /><circle cx="17" cy="16" r="6.5" fill="#2f9a5f" /><path d="M14 16l2 2 4-4" fill="none" stroke="#fff" stroke-width="1.6" /></symbol>
			<symbol id="tfiles" viewBox="0 0 24 24"><rect x="3" y="1" width="20" height="21" fill="#fff" stroke="#888" /><rect x="3" y="1" width="20" height="5" fill="#3a9a7a" /><path d="M0 11h15l3 11H0z" fill="#e6bb6a" /></symbol>
			<symbol id="titems" viewBox="0 0 24 24"><rect x="1" y="2" width="21" height="20" fill="#fff" stroke="#777" /><rect x="1" y="2" width="21" height="4" fill="#3a9a7a" /><rect x="6" y="10" width="10" height="8" fill="#e6bb6a" /><path d="M14 14h8v8h-6z" fill="#6a5ac0" /></symbol>
			<symbol id="rtwin" viewBox="0 0 24 26"><rect x="5" y="1" width="14" height="17" fill="#fff" stroke="#777" /><path d="M8 5h8M8 9h8M8 13h8" stroke="#777" /><path d="M12 18v3M2 24h20" stroke="#3faa78" stroke-width="2" /><rect x="1" y="21" width="5" height="4" fill="#3faa78" /><rect x="18" y="21" width="5" height="4" fill="#3faa78" /></symbol>
			<symbol id="tape" viewBox="0 0 24 20"><rect x="0" y="1" width="24" height="18" rx="3" fill="#2f6db0" /><rect x="3" y="5" width="18" height="8" fill="#7fa8d8" /><circle cx="8" cy="9" r="2.5" fill="#2f6db0" /><circle cx="16" cy="9" r="2.5" fill="#2f6db0" /></symbol>
			<symbol id="chevr" viewBox="0 0 12 16"><path d="M3 2l6 6-6 6" fill="none" stroke="#777" stroke-width="1.8" /></symbol>
			<symbol id="chevd" viewBox="0 0 16 12"><path d="M2 3l6 6 6-6" fill="none" stroke="#222" stroke-width="2" /></symbol>
			<symbol id="combo" viewBox="0 0 16 10"><path d="M1 1l7 7 7-7" fill="none" stroke="#666" stroke-width="1.3" /></symbol>
			<symbol id="thinx" viewBox="0 0 16 16"><path d="M1 1l14 14M15 1L1 15" fill="none" stroke="currentColor" stroke-width="1.3" /></symbol>
			<symbol id="minibar" viewBox="0 0 20 22"><rect x="1" y="1" width="18" height="20" fill="#fff" stroke="#111" stroke-width="2" /><rect x="1" y="1" width="18" height="6" fill="#111" /></symbol>
			<symbol id="appicon" viewBox="0 0 24 24"><rect width="24" height="24" fill="#3a68b0" /><path d="M3 5h6l12 14h-6z" fill="#fff" /><rect x="14" y="3" width="7" height="7" fill="#bcd2ee" /><rect x="3" y="14" width="7" height="7" fill="#bcd2ee" /></symbol>
		</svg>

		<header class="titlebar">
			<svg class="app-ic"><use href="#appicon" /></svg>
			<span class="title-text">J1939_Receiving - PCAN-Explorer</span>
			<div class="caption">
				<span class="cap-btn"><span class="cap-min"></span></span>
				<span class="cap-btn"><span class="cap-max"></span></span>
				<span class="cap-btn"><svg class="x-big"><use href="#thinx" /></svg></span>
			</div>
		</header>

		<nav class="menubar">
			<span class="grip"></span>
			<span v-for="m in menus" :key="m" class="menu">{{ m }}</span>
		</nav>

		<div class="toolbar t1">
			<div v-for="(g, gi) in toolbar1" :key="gi" class="tb-group" :style="{ width: g.w + 'px', paddingLeft: (g.pad || 0) + 'px' }">
				<span class="grip"></span>
				<template v-if="g.macro">
					<span class="macro-label">Macro:</span>
					<div class="combo macro-combo"><svg class="chev"><use href="#combo" /></svg></div>
				</template>
				<template v-for="(it, i) in g.items" :key="i">
					<span v-if="it === '|'" class="tb-sep"></span>
					<span v-else-if="it === 'v'" class="tb-drop"><svg class="chev small"><use href="#combo" /></svg></span>
					<span v-else-if="it === '>'" class="tb-more">»</span>
					<span v-else class="tb-btn" :class="{ hot: hotIcons.includes(it) }">
						<svg class="ic" viewBox="0 0 36 36">
							<use :href="`#${it}`" />
							<text v-for="l in iconText[it]" :key="l.t" :x="l.x" :y="l.y" text-anchor="middle" :font-size="l.s" :fill="l.f" :font-weight="l.w" :font-family="l.fam || 'Roboto'">{{ l.t }}</text>
						</svg>
					</span>
				</template>
			</div>
		</div>

		<div class="toolbar t2">
			<div class="tb-group" :style="{ width: toolbar2.w + 'px', paddingLeft: toolbar2.pad + 'px' }">
				<span class="grip"></span>
				<template v-for="(it, i) in toolbar2.items" :key="i">
					<span v-if="it === '|'" class="tb-sep"></span>
					<span v-else class="tb-btn">
						<svg class="ic" viewBox="0 0 36 36">
							<use :href="`#${it}`" />
							<text v-for="l in iconText[it]" :key="l.t" :x="l.x" :y="l.y" text-anchor="middle" :font-size="l.s" :fill="l.f" :font-weight="l.w" :font-style="l.it ? 'italic' : undefined" :font-family="l.fam || 'Roboto'">{{ l.t }}</text>
						</svg>
					</span>
				</template>
			</div>
		</div>

		<main class="work">
			<section class="doc">
				<div class="tabstrip">
					<div class="tab">
						<svg class="tab-ic"><use href="#tape" /></svg>
						<span>C:\...\_temp\2025-12-04_01-12-44_640.trc</span>
					</div>
					<div class="tab active">
						<svg class="tab-ic"><use href="#rtwin" /></svg>
						<span>Receive / Transmit</span>
						<svg class="tab-x"><use href="#thinx" /></svg>
					</div>
					<span class="tab-menu">▼</span>
				</div>
				<div class="win">
					<div class="win-title">
						<svg class="tab-ic"><use href="#rtwin" /></svg>
						<span>Receive / Transmit</span>
						<div class="win-caption">
							<span class="wc"><span class="cap-min dark"></span></span>
							<span class="wc"><span class="cap-max dark"></span></span>
							<span class="wc"><svg class="x-big"><use href="#thinx" /></svg></span>
						</div>
					</div>
					<div class="win-tools">
						<svg class="ic"><use href="#mailnew" /></svg>
						<svg class="ic step"><use href="#mailoff" /></svg>
						<svg class="ic step"><use href="#waveoff" /></svg>
						<svg class="ic step"><use href="#txoff" /></svg>
						<span class="tb-sep tall sep-a"></span>
						<span class="lbl">Filter:</span>
						<div class="combo filter-combo">
							<svg class="xnone"><use href="#xnone" /></svg><span>None</span>
							<svg class="chev"><use href="#combo" /></svg>
						</div>
						<svg class="ic fn1"><use href="#funneloff" /></svg>
						<svg class="ic fn2"><use href="#funnelplus" /></svg>
						<span class="tb-sep tall sep-b"></span>
						<span class="lbl lbl-cols">Columns:</span>
						<div class="combo cols-combo"><span>CAN</span><svg class="chev"><use href="#combo" /></svg></div>
						<svg class="ic colic"><use href="#columns" /></svg>
						<span class="mini-arrow">▾</span>
					</div>

					<!-- receive list -->
					<div class="pane rx-pane">
						<div class="strip">
							<div class="corner"><svg class="corner-ic"><use href="#minibar" /></svg></div>
							<div class="strip-body rx-strip"><span class="vert dark-text">Receive</span></div>
						</div>
						<div class="list">
							<div class="head rx-grid">
								<span v-for="h in rxHead" :key="h" class="hc" :class="{ center: h === 'Bus' }">{{ h }}</span>
								<span class="hc">Timing Err... <svg class="chev sort"><use href="#combo" /></svg></span>
								<span class="hc right">Cycle Time</span>
								<span class="hc right">Count</span>
							</div>
							<template v-for="r in rxRows" :key="r.id">
								<div class="row rx-grid" :class="{ sel: r.sel }">
									<span class="c c-bus">
										<svg v-if="r.open" class="exp-d"><use href="#chevd" /></svg>
										<svg v-else class="exp-r"><use href="#chevr" /></svg>
										<svg v-if="r.open" class="env-o"><use href="#envopen" /></svg>
										<svg v-else class="env"><use href="#env" /></svg>
										<span class="busn">1</span>
									</span>
									<span class="c"><span class="badge">J1939</span></span>
									<span class="c">{{ r.id }}</span>
									<span class="c">{{ r.can }}</span>
									<span class="c">8</span>
									<span class="c c-sym"><svg class="msg"><use href="#msg" /></svg>{{ r.sym }}</span>
									<span class="c c-data">
										<span v-for="(b, i) in bytes(r.data)" :key="i" class="byte" :class="{ on: r.hl?.includes(i) }">{{ b }}</span>
									</span>
									<span class="c">0</span>
									<span class="c right">{{ r.cycle }}</span>
									<span class="c right">{{ r.count }}</span>
								</div>
								<div v-for="s in r.signals" :key="s.name" class="row sig rx-sig">
									<span class="sig-name"><svg class="wave"><use href="#wave" /></svg>{{ s.name }}</span>
									<span>= {{ s.value }}<span v-if="s.hot" class="byte-on">{{ s.hot }}</span>{{ s.rest }}</span>
									<span class="sig-desc">{{ s.desc }}</span>
								</div>
							</template>
						</div>
					</div>

					<div class="splitter"></div>

					<!-- transmit list -->
					<div class="pane tx-pane">
						<div class="strip">
							<div class="corner"><svg class="corner-ic"><use href="#minibar" /></svg></div>
							<div class="strip-body tx-strip"><span class="vert tx-label">Transmit</span></div>
						</div>
						<div class="list">
							<div class="head tx-grid">
								<span v-for="h in txHead" :key="h" class="hc" :class="{ center: h === 'Bus' }">{{ h }}</span>
								<span class="hc right">Cycle Time</span>
								<span class="hc right">Count</span>
								<span class="hc">Trigger</span>
								<span class="hc creator">Creator</span>
							</div>
							<div class="row tx-grid">
								<span class="c c-bus">
									<svg class="exp-d"><use href="#chevd" /></svg>
									<svg class="env-o"><use href="#envopen" /></svg>
									<span class="busn">1</span>
								</span>
								<span class="c"><span class="badge">J1939</span><span class="badge tp">TP</span></span>
								<span class="c">186DFEF0</span>
								<span class="c">19</span>
								<span class="c c-sym"><svg class="msg"><use href="#msg" /></svg>WSPT1</span>
								<span class="c c-data"><span v-for="(b, i) in wspt" :key="i" class="byte">{{ b }}</span><span>...</span></span>
								<span class="c right">Wait</span>
								<span class="c right">0</span>
								<span class="c"></span>
								<span class="c creator">User</span>
							</div>
							<div v-for="s in txSignals" :key="s.name" class="row sig tx-sig">
								<span class="sig-name"><svg class="wave"><use href="#wave" /></svg>{{ s.name }}</span>
								<span>= {{ s.value }}</span>
								<span class="sig-desc">{{ s.desc }}</span>
							</div>
							<div class="row tx-grid">
								<span class="c c-bus">
									<svg class="exp-r"><use href="#chevr" /></svg>
									<svg class="env"><use href="#env" /></svg>
									<span class="busn">1</span>
								</span>
								<span class="c"><span class="badge">J1939</span></span>
								<span class="c">0C01FEF0</span>
								<span class="c">8</span>
								<span class="c c-sym"><svg class="msg"><use href="#msg" /></svg>TC1</span>
								<span class="c c-data"><span v-for="(b, i) in tc1" :key="i" class="byte">{{ b }}</span></span>
								<span class="c c-cyc"><span class="small-check"></span><span>50</span></span>
								<span class="c right">0</span>
								<span class="c"></span>
								<span class="c creator">User</span>
							</div>
						</div>
					</div>
				</div>
			</section>

			<aside class="side">
				<div class="panel pm">
					<div class="panel-title">Project Manager<svg class="panel-x"><use href="#thinx" /></svg></div>
					<div class="pm-tools">
						<svg class="ic"><use href="#newwin" /></svg>
						<svg class="ic"><use href="#addwin" /></svg>
						<svg class="ic"><use href="#xgrey" /></svg>
						<svg class="ic"><use href="#rename" /></svg>
						<svg class="ic"><use href="#dbgrey" /></svg>
						<span class="mini-arrow pm-arrow">▾</span>
						<svg class="ic"><use href="#wrench" /></svg>
					</div>
					<div class="tree-wrap">
						<div class="tree">
							<span class="guide g-a"></span>
							<span class="guide g-b"></span>
							<span class="guide g-c"></span>
							<div v-for="(t, i) in treeRows" :key="i" class="tree-row" :class="{ leaf: t.leaf }" :style="{ paddingLeft: 8 + 27 * t.l + 'px' }">
								<span class="t-chev">
									<svg v-if="t.chev === 'd'" class="exp-d"><use href="#chevd" /></svg>
									<svg v-else-if="t.chev === 'r'" class="exp-r"><use href="#chevr" /></svg>
								</span>
								<span class="t-icon">
									<svg class="ti" viewBox="0 0 24 24">
										<use :href="`#${t.icon}`" />
										<text v-for="l in iconText[t.icon]" :key="l.t" :x="l.x" :y="l.y" text-anchor="middle" :font-size="l.s" :fill="l.f" font-family="Roboto">{{ l.t }}</text>
									</svg>
								</span>
								<span class="t-text" :class="{ 'tree-sel': t.sel }">{{ t.text }}</span>
							</div>
						</div>
						<div class="vscroll"><span class="thumb"></span></div>
					</div>
					<div class="hscroll"><span class="hthumb"></span></div>
				</div>
				<div class="pm-tabs">
					<div class="pm-tab"><svg class="ti"><use href="#tfiles" /></svg>Project Files</div>
					<div class="pm-tab on"><svg class="ti"><use href="#titems" /></svg>Project Items</div>
				</div>

				<div class="panel props">
					<div class="panel-title">Properties<svg class="panel-x"><use href="#thinx" /></svg></div>
					<div class="props-combo-wrap">
						<div class="combo props-combo"><b>ReceiveMessage</b>&nbsp;ReceiveMessage Properties<svg class="chev"><use href="#combo" /></svg></div>
					</div>
					<div class="props-tools">
						<span class="prop-btn hot"><svg class="ic"><use href="#cat" /></svg></span>
						<span class="prop-btn">
							<svg class="ic" viewBox="0 0 36 36">
								<use href="#az" />
								<text v-for="l in iconText.az" :key="l.t" :x="l.x" :y="l.y" text-anchor="middle" :font-size="l.s" :fill="l.f" :font-weight="l.w" font-family="Roboto">{{ l.t }}</text>
							</svg>
						</span>
					</div>
					<div class="prop-grid">
						<div class="prop-group"><span class="minus"></span><span class="focus">CAN</span></div>
						<div v-for="p in propCan" :key="p[0]" class="prop-row"><span>{{ p[0] }}</span><span>{{ p[1] }}</span></div>
						<div class="prop-group"><span class="minus"></span><span>Misc</span></div>
						<div v-for="p in propMisc" :key="p[0]" class="prop-row"><span>{{ p[0] }}</span><span>{{ p[1] }}</span></div>
					</div>
					<div class="props-foot"></div>
				</div>
			</aside>

			<section class="conn">
				<div class="conn-tab">
					<svg class="conn-x"><use href="#thinx" /></svg>
					<span class="vert conn-label">Connections</span>
				</div>
				<div class="conn-main">
					<div class="conn-tools">
						<svg class="ic c1"><use href="#linkadd" /></svg><span class="t-add">Add...</span>
						<svg class="ic c2"><use href="#reset" /></svg><span>Reset</span>
						<span class="tb-sep tall c3"></span>
						<svg class="ic c4"><use href="#flag" /></svg><span class="t-claim">Claim <u>A</u>ddress</span>
						<svg class="ic c5"><use href="#flagx" /></svg><span class="t-off">Release A<u>d</u>dress</span>
					</div>
					<div class="conn-head conn-grid">
						<span></span><span class="center">Bus</span><span>Name</span><span>Net Connection</span><span>Status</span><span>Overruns</span><span>QXmtFulls</span><span>Options</span><span>Bus Load</span>
					</div>
					<div class="conn-row conn-grid">
						<span class="cb">✓</span>
						<span class="center">1</span>
						<span class="cc"><svg class="ci"><use href="#link" /></svg>Connection J1939</span>
						<span class="cc"><svg class="usb"><use href="#usb" /></svg>500k-2@pcan_usb</span>
						<span class="ok">OK</span>
						<span class="tight">0</span>
						<span class="tight">0</span>
						<span class="tight">EF</span>
						<span class="load"><span class="load-fill"></span><span class="load-peak"></span><span class="load-val">2,8%</span></span>
					</div>
				</div>
			</section>
			<span class="resize-dots"></span>
		</main>
	</div>
</template>

<style>
html, body {
	margin: 0;
	background: #111;
}
</style>

<style scoped>
.app {
	position: relative;
	width: 2499px;
	height: 1709px;
	display: flex;
	flex-direction: column;
	overflow: hidden;
	background: #1c1c1c;
	border-radius: 12px 12px 0 0;
	font: 17.75px Roboto, "Liberation Sans", sans-serif;
	color: #1c1c1c;
	box-sizing: border-box;
	padding: 0 2px 3px;
}

.sprite {
	position: absolute;
}

.titlebar {
	height: 47px;
	flex: none;
	display: flex;
	align-items: center;
	background: #202020;
	color: #fff;
	margin: 0 -2px;
}

.app-ic {
	width: 24px;
	height: 24px;
	margin-left: 14px;
	margin-right: 9px;
}

.caption {
	margin-left: auto;
	display: flex;
}

.cap-btn {
	width: 72px;
	height: 47px;
	display: flex;
	align-items: center;
	justify-content: center;
	color: #fff;
}

.x-big {
	width: 17px;
	height: 17px;
}

.cap-min {
	display: block;
	width: 15px;
	height: 1.5px;
	background: #fff;
}

.cap-max {
	display: block;
	width: 14px;
	height: 14px;
	border: 1.5px solid #fff;
	border-radius: 2px;
}

.cap-min.dark {
	background: #222;
}

.cap-max.dark {
	border-color: #222;
	border-radius: 0;
}

.menubar {
	height: 36px;
	flex: none;
	display: flex;
	align-items: center;
	background: #bac7d9;
	padding-left: 5px;
	box-sizing: border-box;
}

.menu {
	padding: 0 11.4px;
	color: #14203a;
}

.menu:first-of-type {
	padding-left: 13px;
}

.grip {
	flex: none;
	width: 8.67px;
	height: 26px;
	background: radial-gradient(circle, #7a8db0 1.3px, transparent 1.6px) 3px 0 / 5px 6px repeat-y;
}

.toolbar {
	flex: none;
	display: flex;
	background: #9aa8c0;
	box-sizing: border-box;
	overflow: hidden;
}

.t1 {
	height: 52px;
	gap: 2px;
	background: #c4cfdf;
	border-bottom: 1px solid #c4cfdf;
}

.t2 {
	height: 51px;
}

.t2 .tb-btn {
	width: 46.55px;
}

.tb-group {
	flex: none;
	display: flex;
	align-items: center;
	box-sizing: border-box;
	background: #bac7d9;
	border-right: 1px solid #c9d3e2;
}

.tb-btn {
	flex: none;
	width: 46.67px;
	height: 45px;
	display: flex;
	align-items: center;
	justify-content: center;
	box-sizing: border-box;
}

.tb-btn.hot {
	background: #fde7ae;
	border-radius: 7px;
}

.ic {
	width: 36px;
	height: 36px;
	flex: none;
}

.tb-sep {
	flex: none;
	width: 8.4px;
	height: 30px;
	background: linear-gradient(#94a3ba, #94a3ba) center / 1px 100% no-repeat;
}

.tb-drop {
	flex: none;
	width: 18px;
	display: flex;
	justify-content: center;
}

.tb-more {
	align-self: flex-start;
	margin-top: 1px;
	width: 20px;
	text-align: center;
	font: 700 24px/24px "DejaVu Sans", sans-serif;
	color: #111;
}

.chev {
	width: 17px;
	height: 11px;
	flex: none;
}

.chev.small {
	width: 12px;
	height: 8px;
}

.macro-label {
	margin-left: 7px;
	width: 56px;
	flex: none;
}

.combo {
	display: flex;
	align-items: center;
	box-sizing: border-box;
	background: #fff;
	border: 1px solid #8592a8;
	border-radius: 2px;
	flex: none;
}

.combo .chev {
	margin-left: auto;
	margin-right: 6px;
}

.macro-combo {
	width: 374px;
	height: 34px;
	margin-left: 9px;
}

.work {
	flex: 1;
	display: grid;
	grid-template-columns: 1982px 485px;
	grid-template-rows: 1307px 153px;
	column-gap: 9px;
	row-gap: 11px;
	padding: 0 9px 0 10px;
	min-height: 0;
	position: relative;
	background: #2b3a57;
}

/* document area */
.doc {
	display: flex;
	flex-direction: column;
	min-width: 0;
}

.tabstrip {
	height: 44px;
	flex: none;
	display: flex;
	align-items: flex-end;
	position: relative;
}

.tab {
	height: 34px;
	display: flex;
	align-items: center;
	gap: 6px;
	padding-left: 4px;
	color: #dfe4ee;
	width: 396px;
	box-sizing: border-box;
	letter-spacing: -.12px;
	white-space: nowrap;
}

.tab.active {
	width: 217px;
	background: #fdf1d5;
	color: #1c1c1c;
	border-radius: 5px 5px 0 0;
	padding-left: 7px;
}

.tab-ic {
	width: 26px;
	height: 26px;
	flex: none;
}

.tab-x {
	margin-left: 7px;
	width: 15px;
	height: 15px;
	flex: none;
}

.tab-menu {
	position: absolute;
	right: 6px;
	bottom: 6px;
	font-size: 11px;
	color: #dfe4ee;
}

.win {
	flex: 1;
	display: flex;
	flex-direction: column;
	border-top: 4px solid #fdf1d5;
	background: #e8ecf4;
	padding-left: 7px;
	box-sizing: border-box;
	min-height: 0;
}

.win-title {
	height: 48px;
	flex: none;
	display: flex;
	align-items: center;
	gap: 5px;
	margin-left: -7px;
	padding-left: 8px;
	background: #fef7e8;
	border-top: 1px solid #a7b4c9;
	box-sizing: border-box;
}

.win-caption {
	margin-left: auto;
	display: flex;
}

.wc {
	width: 70px;
	display: flex;
	align-items: center;
	justify-content: center;
}

.win-tools {
	height: 51px;
	flex: none;
	display: flex;
	align-items: center;
	background: #b8c5d8;
	padding-left: 7px;
}

.step {
	margin-left: 10.5px;
}

.tb-sep.tall {
	height: 36px;
}

.sep-a {
	margin-left: 5px;
}

.sep-b {
	margin-left: 6px;
}

.lbl {
	margin-left: 7px;
	flex: none;
}

.lbl-cols {
	margin-left: 8px;
}

.filter-combo {
	width: 299px;
	height: 34px;
	margin-left: 8px;
	gap: 5px;
	padding-left: 8px;
}

.xnone {
	width: 20px;
	height: 24px;
}

.fn1 {
	margin-left: 1px;
}

.fn2 {
	margin-left: 15px;
}

.cols-combo {
	width: 104px;
	height: 34px;
	margin-left: 10px;
	padding-left: 6px;
}

.colic {
	margin-left: 7px;
}

.mini-arrow {
	font-size: 14px;
	margin-left: -6px;
	color: #222;
}

.pane {
	display: flex;
	min-height: 0;
	background: #fff;
}

.rx-pane {
	height: 735px;
	flex: none;
}

.tx-pane {
	flex: 1;
}

.splitter {
	height: 9px;
	flex: none;
	background: #b8c5d8;
}

.strip {
	width: 34px;
	flex: none;
	display: flex;
	flex-direction: column;
}

.corner {
	height: 27px;
	flex: none;
	background: #f0f0f0;
	display: flex;
	align-items: center;
	justify-content: center;
}

.corner-ic {
	width: 18px;
	height: 20px;
}

.strip-body {
	display: flex;
	align-items: center;
	justify-content: center;
}

.rx-strip {
	flex: 1;
	background: #fdefcb;
}

.tx-strip {
	height: 373px;
	margin-top: 3px;
	background: #4c5f80;
	color: #e6e9f0;
}

.vert {
	writing-mode: vertical-rl;
	transform: rotate(180deg);
	font: 26px "DejaVu Sans", sans-serif;
}

.tx-label {
	font-size: 28px;
}

.dark-text {
	color: #111;
	-webkit-text-stroke: .4px #111;
}

.list {
	flex: 1;
	min-width: 0;
	width: 1907px;
}

.head {
	height: 27px;
	align-items: center;
}

.hc {
	padding: 2px 0 0 10px;
	white-space: nowrap;
	border-left: 1px solid #ececec;
	height: 100%;
	display: flex;
	align-items: center;
	box-sizing: border-box;
	color: #222;
}

.hc:first-child {
	border-left: 0;
}

.hc.center {
	justify-content: center;
	padding-left: 0;
	padding-right: 34px;
}

.hc.right {
	justify-content: flex-end;
	padding-right: 9px;
}

.sort {
	margin-left: 10px;
	width: 11px;
	height: 7px;
}

.rx-grid,
.tx-grid {
	display: grid;
	width: 1907px;
}

.rx-grid {
	grid-template-columns: 104px 108px 143px 145px 108px 433px 432px 144px 144px 146px;
}

.tx-grid {
	grid-template-columns: 104px 110px 147px 109px 439px 441px 148px 147px 143px 119px;
}

.row {
	height: 27px;
	padding-top: 1.5px;
	box-sizing: border-box;
	border-bottom: 1px dotted #e2e2e2;
	align-items: center;
	white-space: nowrap;
}

.row.sel {
	background: #a3d3ff;
	outline: 2px solid #111;
	outline-offset: -2px;
	border-bottom: 0;
	padding-top: 0;
}

.c {
	padding-left: 10px;
	height: 100%;
	display: flex;
	align-items: center;
	overflow: hidden;
	box-sizing: border-box;
}

.c.right {
	justify-content: flex-end;
	padding-right: 9px;
	padding-left: 0;
}

.c-bus {
	padding-left: 0;
	overflow: visible;
}

.exp-r {
	width: 10px;
	height: 14px;
	margin-left: 9px;
	flex: none;
}

.exp-d {
	width: 14px;
	height: 10px;
	margin-left: 7px;
	flex: none;
}

.env {
	width: 22px;
	height: 20px;
	margin-left: 11px;
	flex: none;
}

.env-o {
	width: 23px;
	height: 26px;
	margin-left: 10px;
	flex: none;
}

.busn {
	margin-left: 23px;
}

.badge {
	display: inline-flex;
	align-items: center;
	justify-content: center;
	height: 20px;
	width: 45px;
	flex: none;
	background: #008078;
	color: #e0f2f0;
	font-size: 17px;
}

.badge.tp {
	width: 23px;
	margin-left: 3px;
	background: #000;
	color: #fff;
	letter-spacing: -.5px;
}

.c-sym {
	padding-left: 4px;
	overflow: visible;
}

.msg {
	width: 24px;
	height: 24px;
	margin-right: 9px;
	flex: none;
}

.c-data {
	padding-left: 7px;
	overflow: visible;
}

.byte {
	width: 24px;
	margin-right: 1.3px;
	flex: none;
	text-align: center;
	line-height: 23px;
}

.byte.on,
.byte-on {
	background: #7ff5c6;
}

.byte-on {
	padding: 2px 1px;
}

.sig {
	display: grid;
	width: 1907px;
}

.rx-sig {
	grid-template-columns: 93px 299px 457px 1053px;
}

.tx-sig {
	grid-template-columns: 93px 308px 168px 1333px;
}

.sig-name {
	position: relative;
	grid-column: 1 / 3;
	padding-left: 93px;
}

.wave {
	position: absolute;
	left: 62px;
	top: -1px;
	width: 24px;
	height: 24px;
}

.sig-desc {
	overflow: hidden;
	white-space: pre;
	font-size: 17.87px;
}

.c-cyc {
	justify-content: space-between;
	padding-right: 9px;
}

.small-check {
	width: 15px;
	height: 15px;
	border: 1.5px solid #666;
	border-radius: 3px;
	box-sizing: border-box;
	background: #fff;
}

.hc.creator,
.c.creator {
	padding-left: 13px;
}

/* right column */
.side {
	display: flex;
	flex-direction: column;
	padding-top: 9px;
	min-width: 0;
}

.panel {
	display: flex;
	flex-direction: column;
	background: #f0f0f0;
}

.panel-title {
	height: 35px;
	flex: none;
	display: flex;
	align-items: center;
	justify-content: space-between;
	padding: 0 8px;
	background: #4b5d7f;
	color: #e6e9f0;
	border-radius: 6px 6px 0 0;
}

.panel-x {
	width: 15px;
	height: 15px;
	color: #aab4c6;
}

.pm {
	height: 653px;
	flex: none;
}

.pm-tools {
	height: 52px;
	flex: none;
	display: flex;
	align-items: center;
	background: #b8c5d8;
	padding-left: 11px;
	gap: 12px;
}

.pm-tools .ic {
	width: 34px;
	height: 34px;
}

.pm-arrow {
	margin-left: -10px;
	color: #8f99a8;
}

.tree-wrap {
	flex: 1;
	display: flex;
	min-height: 0;
}

.tree {
	position: relative;
	width: 461px;
	flex: none;
	background: #fff;
	overflow: hidden;
	border-radius: 0 0 4px 0;
}

.guide {
	position: absolute;
	width: 0;
	border-left: 1px dotted #999;
}

.g-a {
	left: 48px;
	top: 53px;
	bottom: 0;
}

.g-b {
	left: 102px;
	top: 298px;
	bottom: 0;
}

.g-c {
	left: 129px;
	top: 298px;
	height: 216px;
}

.tree-row {
	height: 27px;
	display: flex;
	align-items: center;
	position: relative;
	white-space: nowrap;
	box-sizing: border-box;
}

.tree-row.leaf::before {
	content: "";
	position: absolute;
	top: 50%;
	width: 16px;
	border-top: 1px dotted #999;
	margin-left: 13px;
}

.t-chev {
	width: 27px;
	flex: none;
	display: flex;
	align-items: center;
	justify-content: center;
}

.t-chev svg {
	margin-left: 0;
}

.t-icon {
	width: 26px;
	flex: none;
	display: flex;
	justify-content: center;
}

.ti {
	width: 24px;
	height: 24px;
	flex: none;
}

.t-text {
	margin-left: 10px;
	font-size: 17.4px;
}

.tree-sel {
	margin-left: 3px;
	padding: 2px 6px;
	background: #f0f0f0;
	border: 1px solid #9a9a9a;
}

.vscroll {
	flex: 1;
	position: relative;
}

.thumb {
	position: absolute;
	left: 9px;
	top: 26px;
	width: 3px;
	height: 25px;
	background: #8a8a8a;
}

.hscroll {
	height: 24px;
	flex: none;
	position: relative;
}

.hthumb {
	position: absolute;
	left: 26px;
	top: 11px;
	width: 402px;
	height: 2px;
	background: #8a8a8a;
}

.pm-tabs {
	height: 36px;
	flex: none;
	display: flex;
	margin-bottom: 12px;
}

.pm-tab {
	display: flex;
	align-items: center;
	gap: 7px;
	padding-left: 7px;
	width: 139px;
	box-sizing: border-box;
	color: #dfe4ee;
	white-space: nowrap;
}

.pm-tab.on {
	background: #fff;
	color: #1c1c1c;
	width: 147px;
}

.props {
	height: 599px;
	flex: none;
	background: #fff;
}

.props-combo-wrap {
	height: 39px;
	flex: none;
	padding: 3px 3px;
	box-sizing: border-box;
	background: #eef0f4;
}

.props-combo {
	height: 33px;
	padding-left: 7px;
	width: 100%;
}

.props-tools {
	height: 50px;
	flex: none;
	display: flex;
	align-items: center;
	background: #b8c5d8;
	padding-left: 3px;
}

.prop-btn {
	width: 47px;
	height: 44px;
	display: flex;
	align-items: center;
	justify-content: center;
	border-radius: 6px;
}

.prop-btn.hot {
	background: #fde7ae;
}

.prop-grid {
	flex: 1;
}

.prop-group {
	height: 31px;
	display: flex;
	align-items: center;
	background: #f0f0f0;
	color: #808080;
	box-sizing: border-box;
}

.minus {
	width: 14px;
	height: 12px;
	margin: 0 6px 0 4px;
	border: 1px solid #777;
	border-radius: 2px;
	background: linear-gradient(#555, #555) center / 8px 1.5px no-repeat;
}

.focus {
	outline: 1px dotted #333;
	padding: 2px 1px;
	margin-left: -2px;
}

.prop-row {
	height: 30px;
	display: grid;
	grid-template-columns: 251px 1fr;
	align-items: center;
	box-sizing: border-box;
	background: linear-gradient(#f0f0f0, #f0f0f0) 0 0 / 23px 100% no-repeat;
	border-bottom: 1px solid #f0f0f0;
}

.prop-row span:first-child {
	padding-left: 47px;
}

.prop-row span:last-child {
	color: #808080;
	border-left: 2px solid #f0f0f0;
	height: 100%;
	display: flex;
	align-items: center;
	padding-left: 3px;
	box-sizing: border-box;
}

.props-foot {
	height: 8px;
	flex: none;
	background: #b8c5d8;
}

/* connections dock */
.conn {
	grid-column: 1 / 3;
	display: flex;
	min-width: 0;
}

.conn-tab {
	width: 34px;
	flex: none;
	background: #4b5d7f;
	color: #d6dbe6;
	border-radius: 6px 0 0 6px;
	display: flex;
	flex-direction: column;
	align-items: center;
}

.conn-x {
	width: 15px;
	height: 15px;
	margin-top: 9px;
	color: #aab4c6;
}

.conn-label {
	font-size: 16.5px;
	margin-top: 15px;
}

.conn-main {
	flex: 1;
	display: flex;
	flex-direction: column;
	background: #fff;
	min-width: 0;
}

.conn-tools {
	height: 50px;
	flex: none;
	display: flex;
	align-items: center;
	background: #b8c5d8;
	white-space: nowrap;
}

.c1 {
	margin-left: 9px;
	margin-right: 4px;
}

.t-add {
	margin-right: 16px;
}

.c2 {
	width: 30px;
	height: 30px;
	margin-right: 6px;
}

.c3 {
	margin-left: 4px;
}

.c4 {
	margin-left: 6px;
	margin-right: 6px;
}

.t-claim {
	margin-right: 11px;
}

.c5 {
	margin-right: 3px;
}

.t-off {
	color: #848e9c;
}

.conn-grid {
	display: grid;
	grid-template-columns: 36px 59px 504px 763px 212px 187px 188px 187px 307px;
	align-items: center;
}

.conn-head {
	height: 31px;
}

.conn-head span {
	height: 100%;
	display: flex;
	align-items: center;
	padding-left: 6px;
	border-left: 1px solid #ececec;
	box-sizing: border-box;
}

.conn-head span.center {
	justify-content: center;
	padding-left: 0;
}

.conn-row {
	height: 34px;
}

.cb {
	width: 19px;
	height: 20px;
	margin-left: 8px;
	background: #0067c0;
	color: #fff;
	border-radius: 3px;
	font: 14px/20px "DejaVu Sans", sans-serif;
	text-align: center;
}

.conn-row .center {
	text-align: center;
}

.cc {
	display: flex;
	align-items: center;
	gap: 3px;
}

.ci {
	width: 25px;
	height: 25px;
	margin-left: 3px;
}

.usb {
	width: 16px;
	height: 24px;
	margin: 0 10px 0 6px;
}

.ok {
	color: #2a9d2a;
	padding-left: 1px;
}

.tight {
	padding-left: 1px;
}

.load {
	position: relative;
	height: 25px;
	width: 299px;
	margin-left: 4px;
	border: 1px solid #e4e4e4;
	box-sizing: border-box;
	display: flex;
	align-items: center;
	justify-content: center;
}

.load-fill {
	position: absolute;
	left: 1px;
	top: 1px;
	bottom: 1px;
	width: 9px;
	background: #1fae9e;
}

.load-peak {
	position: absolute;
	left: 20px;
	top: 1px;
	bottom: 1px;
	width: 2px;
	background: #ee5a24;
}

.resize-dots {
	position: absolute;
	right: 3px;
	bottom: 2px;
	width: 16px;
	height: 16px;
	background: radial-gradient(circle, #dfe4ee 1.2px, transparent 1.5px) 0 0 / 5px 5px;
	clip-path: polygon(100% 0, 100% 100%, 0 100%);
}
</style>
